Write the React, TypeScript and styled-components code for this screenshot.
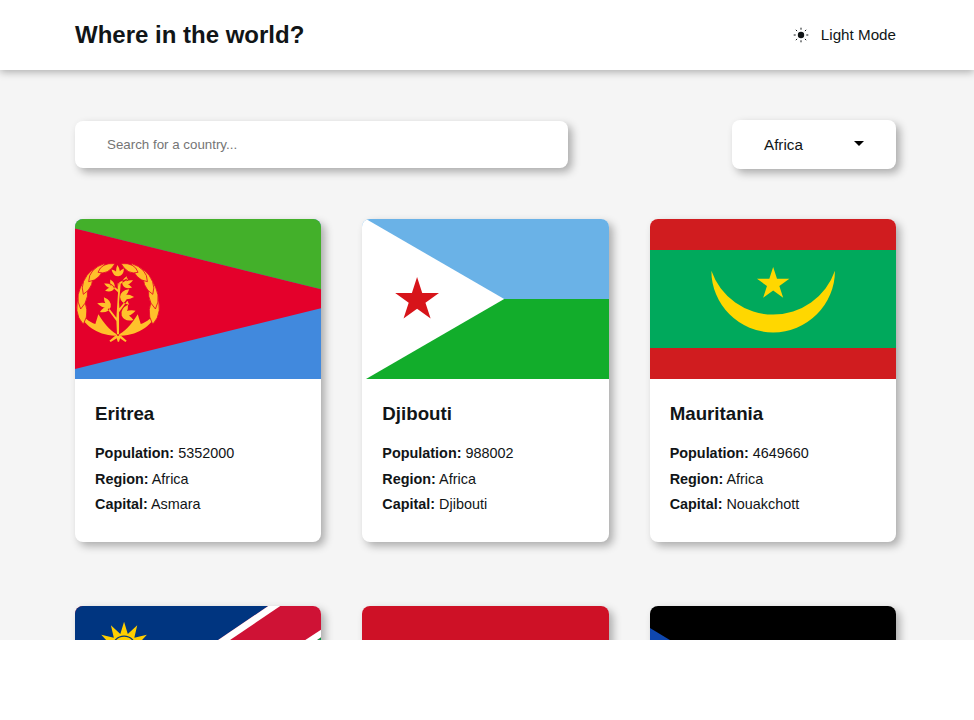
import React from "react";
import styled, { createGlobalStyle } from "styled-components";

const Global = createGlobalStyle`
  html, body { margin: 0; padding: 0; background: #fff; }
  body { font-family: "Liberation Sans", Arial, sans-serif; color: #111517; }
  * { box-sizing: border-box; }
`;

const Page = styled.div`
  height: 640px;
  overflow: hidden;
  background: #f5f5f5;
`;
const Header = styled.header`
  height: 70px;
  padding: 0 78px 0 75px;
  background: #fff;
  box-shadow: 0 2px 8px rgba(0, 0, 0, 0.3);
  display: flex;
  align-items: center;
  justify-content: space-between;
  position: relative;
`;
const Title = styled.h1`
  margin: 0;
  font-size: 24px;
  line-height: 28px;
  font-weight: 700;
  color: #111517;
`;
const ModeToggle = styled.button`
  display: flex;
  align-items: center;
  gap: 12px;
  padding: 0;
  border: 0;
  background: none;
  font: 400 15.2px "Liberation Sans", Arial, sans-serif;
  color: #111517;
`;
const ModeLabel = styled.span`
  margin-top: -2px;
`;
const Main = styled.main`
  padding: 50px 78px 0 75px;
`;
const Controls = styled.div`
  display: flex;
  align-items: center;
  justify-content: space-between;
  margin-bottom: 50px;
`;
const Search = styled.input`
  width: 493px;
  height: 47px;
  padding: 0 32px;
  border: 0;
  border-radius: 8px;
  background: #fff;
  box-shadow: 4px 4px 8px rgba(0, 0, 0, 0.3);
  font: 400 13.33px "Liberation Sans", Arial, sans-serif;
  outline: none;
  &::placeholder { color: #757575; opacity: 1; }
`;
const Dropdown = styled.div`
  width: 164px;
  height: 49px;
  padding: 0 32px;
  border-radius: 8px;
  background: #fff;
  box-shadow: 4px 4px 8px rgba(0, 0, 0, 0.3);
  display: flex;
  align-items: center;
  justify-content: space-between;
  font-size: 15.2px;
`;
const Caret = styled.svg`
  width: 10px;
  height: 5px;
  margin-top: -3px;
  display: block;
`;
const Grid = styled.div`
  display: grid;
  grid-template-columns: repeat(3, 1fr);
  column-gap: 41px;
  row-gap: 64px;
`;
const Card = styled.article`
  height: 323px;
  border-radius: 8px;
  background: #fff;
  overflow: hidden;
  box-shadow: 4px 4px 8px rgba(0, 0, 0, 0.3);
`;
const FlagBox = styled.svg`
  width: calc(100% + 1px);
  height: 160px;
  display: block;
`;
const CardBody = styled.div`
  padding: 24px 20px 0;
`;
const CardTitle = styled.h2`
  margin: 0 0 17px;
  font-size: 18.72px;
  line-height: 21px;
  font-weight: 700;
  color: #111517;
`;
const Fact = styled.p`
  margin: 0;
  font-size: 14.4px;
  line-height: 25.5px;
  color: #111517;
  b { font-weight: 700; }
`;

const starPoints = (cx: number, cy: number, r: number, n = 5, inner = 0.382) =>
  Array.from({ length: n * 2 }, (_, i) => {
    const a = -Math.PI / 2 + (i * Math.PI) / n;
    const q = i % 2 ? r * inner : r;
    return `${(cx + q * Math.cos(a)).toFixed(2)},${(cy + q * Math.sin(a)).toFixed(2)}`;
  }).join(" ");

const leaf = (bx: number, by: number, tx: number, ty: number, w: number) => {
  const dx = tx - bx;
  const dy = ty - by;
  const len = Math.hypot(dx, dy) || 1;
  const nx = (-dy / len) * w;
  const ny = (dx / len) * w;
  const mx = bx + dx * 0.4;
  const my = by + dy * 0.4;
  return `M${bx} ${by}Q${mx + nx} ${my + ny} ${tx} ${ty}Q${mx - nx} ${my - ny} ${bx} ${by}Z`;
};

const cluster = (bx: number, by: number, angle: number, size: number) =>
  [-40, 0, 40]
    .map((d) => {
      const a = ((angle + d) * Math.PI) / 180;
      const s = d === 0 ? size : size * 0.85;
      return leaf(bx, by, bx + s * Math.cos(a), by + s * Math.sin(a), size * 0.34);
    })
    .join("");

const wreathLeaves = [
  leaf(40, 328, 30, 232, 30),
  leaf(32, 282, 46, 192, 28),
  leaf(40, 238, 68, 163, 26),
  leaf(56, 200, 105, 145, 26),
  leaf(84, 172, 135, 146, 22),
];
const wreathBase =
  "M25 285C38 328 78 360 136 362L140 358C118 346 100 322 85 298L76 327C58 322 40 306 25 285Z";

const branch =
  "M141 362L139 318 113 283 117 280 139 308 142 262 147 262 148 280 169 254 172 257 147 292 147 362Z" +
  "M142 262L144 232 118 208 121 205 145 225 148 202 172 190 174 193 152 206 147 262Z" +
  "M143 205L146 205 147 232 143 232Z" +
  "M141 358L118 377 122 381 140 370 143 380 147 380 150 370 166 381 170 377 148 358Z" +
  cluster(133, 220, 205, 34) +
  cluster(158, 210, -25, 34) +
  cluster(150, 246, 0, 42) +
  cluster(122, 276, 195, 42) +
  cluster(155, 302, -20, 44) +
  cluster(145, 184, -95, 34);

const Sun = () => (
  <svg width="16" height="16" viewBox="0 0 16 16" aria-hidden="true">
    <circle cx="8" cy="8" r="3.2" fill="#111517" />
    <g stroke="#111517" strokeWidth="1" strokeLinecap="butt">
      <path d="M8 .7v2M8 13.3v2M.7 8h2M13.300 8h2M2.800 2.800l1.300 1.300M11.900 11.900l1.300 1.300M2.800 13.200l1.300-1.300M11.900 4.100l1.300-1.300" />
    </g>
  </svg>
);

const WreathSide = () => (
  <g stroke="#E4002B" strokeWidth="2.500" strokeLinejoin="round">
    <path d={wreathBase} strokeWidth="0" />
    {wreathLeaves.map((d) => (
      <path key={d} d={d} />
    ))}
  </g>
);

const Eritrea = () => (
  <FlagBox viewBox="0 0 247 160" preserveAspectRatio="none">
    <rect width="247" height="160" fill="#4189DD" />
    <polygon points="0,0 247,0 247,70.500 0,9.5" fill="#43B02A" />
    <polygon points="0,9.5 247,70.500 247,89 0,150" fill="#E4002B" />
    <g fill="#FFC12B" transform="translate(-5 -4) scale(0.3333)">
      <WreathSide />
      <g transform="translate(288 0) scale(-1 1)">
        <WreathSide />
      </g>
      <path d={branch} />
    </g>
  </FlagBox>
);

const Djibouti = () => (
  <FlagBox viewBox="0 0 247 160" preserveAspectRatio="none">
    <rect width="247" height="80" fill="#6AB2E7" />
    <rect y="80" width="247" height="80" fill="#12AD2B" />
    <polygon points="0,0 4,0 142,80 4,160 0,160" fill="#fff" />
    <polygon points={starPoints(55, 81, 23)} fill="#D7141A" />
  </FlagBox>
);

const Mauritania = () => (
  <FlagBox viewBox="0 0 247 160" preserveAspectRatio="none">
    <rect width="247" height="160" fill="#D01C1F" />
    <rect y="31" width="247" height="98" fill="#00A95C" />
    <path d="M61.300 51.700A61.700 61.700 0 0 0 184.700 51.700A65.300 65.300 0 0 1 61.300 51.700Z" fill="#FFD700" />
    <polygon points={starPoints(123, 65, 17)} fill="#FFD700" />
  </FlagBox>
);

const Namibia = () => (
  <FlagBox viewBox="0 0 247 160" preserveAspectRatio="none">
    <rect width="247" height="160" fill="#CF1235" />
    <polygon points="0,0 193,0 0,131" fill="#003580" />
    <polygon points="193,0 205,0 0,139 0,131" fill="#fff" />
    <polygon points="247,30.500 247,160 47,160" fill="#009A44" />
    <polygon points="247,23 247,30.500 47,160 35,160" fill="#fff" />
    <polygon points={starPoints(49, 42, 26.3, 12, 0.55)} fill="#FFCE00" />
    <circle cx="49" cy="42" r="11.800" fill="#FFCE00" stroke="#003580" strokeWidth="1.200" />
  </FlagBox>
);

const Angola = () => (
  <FlagBox viewBox="0 0 247 160" preserveAspectRatio="none">
    <rect width="247" height="80" fill="#CE1126" />
    <rect y="80" width="247" height="80" fill="#000" />
  </FlagBox>
);

const SouthSudan = () => (
  <FlagBox viewBox="0 0 247 160" preserveAspectRatio="none">
    <rect width="247" height="160" fill="#000" />
    <rect y="50" width="247" height="60" fill="#fff" />
    <rect y="56" width="247" height="48" fill="#DA121A" />
    <rect y="110" width="247" height="50" fill="#078930" />
    <polygon points="0,22 96,80 0,138" fill="#0F47AF" />
  </FlagBox>
);

type Country = {
  name: string;
  Flag: () => React.JSX.Element;
  population?: number;
  capital?: string;
};

const countries: Country[] = [
  { name: "Eritrea", population: 5352000, capital: "Asmara", Flag: Eritrea },
  { name: "Djibouti", population: 988002, capital: "Djibouti", Flag: Djibouti },
  { name: "Mauritania", population: 4649660, capital: "Nouakchott", Flag: Mauritania },
  { name: "Namibia", Flag: Namibia },
  { name: "Angola", Flag: Angola },
  { name: "South Sudan", Flag: SouthSudan },
];

export default function App() {
  return (
    <Page>
      <Global />
      <Header>
        <Title>Where in the world?</Title>
        <ModeToggle>
          <Sun />
          <ModeLabel>Light Mode</ModeLabel>
        </ModeToggle>
      </Header>
      <Main>
        <Controls>
          <Search placeholder="Search for a country..." />
          <Dropdown>
            Africa
            <Caret viewBox="0 0 10 5" aria-hidden="true">
              <polygon points="0,0 10,0 5,5" fill="#000" />
            </Caret>
          </Dropdown>
        </Controls>
        <Grid>
          {countries.map(({ name, population, capital, Flag }) => (
            <Card key={name}>
              <Flag />
              {population !== undefined && (
                <CardBody>
                  <CardTitle>{name}</CardTitle>
                  <Fact><b>Population:</b> {population}</Fact>
                  <Fact><b>Region:</b> Africa</Fact>
                  <Fact><b>Capital:</b> {capital}</Fact>
                </CardBody>
              )}
            </Card>
          ))}
        </Grid>
      </Main>
    </Page>
  );
}
